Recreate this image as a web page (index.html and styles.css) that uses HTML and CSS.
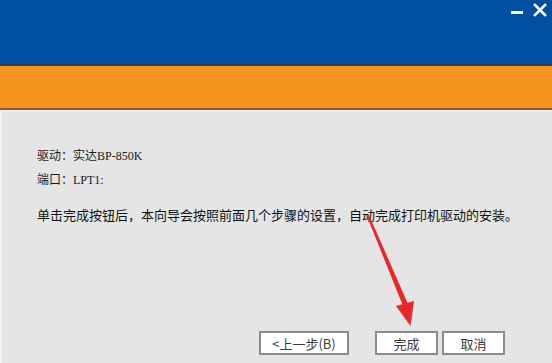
FILE: index.html
```html
<!DOCTYPE html>
<html lang="zh-CN">
<head>
<meta charset="utf-8">
<title>安装完成</title>
<link rel="stylesheet" href="styles.css">
</head>
<body>
<div class="window">
  <div class="titlebar">
    <div class="controls">
      <svg class="ctl" width="14" height="14" viewBox="0 0 14 14"><rect x="1" y="8" width="12" height="3" fill="#fff"/></svg>
      <svg class="ctl" width="14" height="14" viewBox="0 0 14 14"><path d="M2 2 L12 12 M12 2 L2 12" stroke="#fff" stroke-width="2.6" stroke-linecap="square"/></svg>
    </div>
  </div>
  <div class="banner"></div>
  <div class="content">
    <div class="info">
      <p class="line">驱动：实达<span class="latin">BP-850K</span></p>
      <p class="line">端口：<span class="latin">LPT1:</span></p>
    </div>
    <p class="sentence">单击完成按钮后，本向导会按照前面几个步骤的设置，自动完成打印机驱动的安装。</p>
    <div class="buttons">
      <button class="btn btn-back">&lt;上一步(B)</button>
      <div class="btn-pair">
        <button class="btn btn-sm">完成</button>
        <button class="btn btn-sm">取消</button>
      </div>
    </div>
  </div>
  <svg class="arrow" width="552" height="363" viewBox="0 0 552 363">
    <polygon points="366.5,215 369,215 408,304 403,306" fill="#e8292c"/>
    <polygon points="396,306 414,301 410.5,326" fill="#e8292c"/>
  </svg>
</div>
</body>
</html>
```

FILE: styles.css
```css
html, body {
  margin: 0;
  padding: 0;
}
body {
  width: 552px;
  height: 363px;
  overflow: hidden;
  background: #e5e5e5;
  font-family: "Noto Sans CJK SC", "Noto Sans", sans-serif;
}
.window {
  position: relative;
  width: 552px;
  height: 363px;
  display: flex;
  flex-direction: column;
}
.titlebar {
  height: 64px;
  background: #004fa1;
  border-bottom: 2px solid #2f3b4c;
  display: flex;
  justify-content: flex-end;
  align-items: flex-start;
}
.controls {
  display: flex;
  gap: 9px;
  padding: 3px 5px 0 0;
}
.ctl {
  display: block;
}
.banner {
  height: 42px;
  background: #f7931f;
  border-bottom: 2px solid #84602c;
}
.content {
  flex: 1;
  background: #e5e5e5;
  border-top: 2px solid #ececec;
  border-left: 2px solid #f2f2f2;
  padding: 35px 0 0 35px;
  display: flex;
  flex-direction: column;
  color: #1a1a1a;
}
.info {
  display: flex;
  flex-direction: column;
  gap: 7px;
}
.line {
  margin: 0;
  font-size: 12px;
  line-height: 16px;
  font-family: "Noto Sans CJK SC", sans-serif;
}
.latin {
  font-family: "Liberation Serif", serif;
  font-size: 12px;
}
.sentence {
  margin: 18px 0 0 0;
  font-size: 13px;
  line-height: 18px;
  color: #111;
}
.buttons {
  margin-top: auto;
  margin-bottom: 8px;
  display: flex;
  justify-content: flex-end;
  padding-right: 47px;
  gap: 26px;
}
.btn-pair {
  display: flex;
  gap: 4px;
}
.btn {
  height: 24px;
  background: #ffffff;
  border: 2px solid #8c8c8c;
  font-family: "Noto Sans CJK SC", sans-serif;
  font-size: 13px;
  color: #3a3a3a;
  padding: 0;
  box-sizing: border-box;
}
.btn-back {
  width: 90px;
}
.btn-sm {
  width: 63px;
}
.arrow {
  position: absolute;
  left: 0;
  top: 0;
  pointer-events: none;
}
```
